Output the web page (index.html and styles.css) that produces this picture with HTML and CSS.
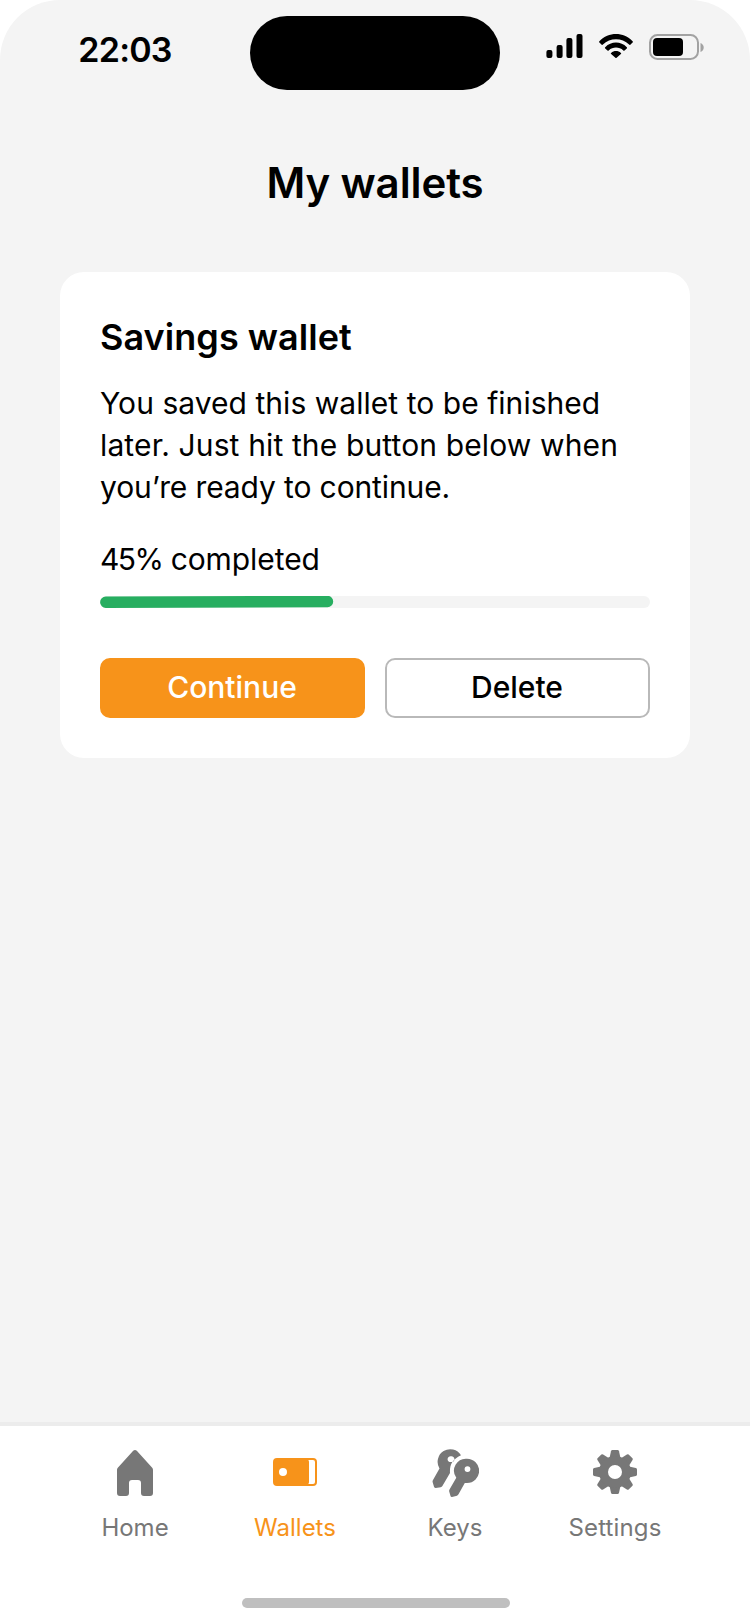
FILE: index.html
```html
<!DOCTYPE html>
<html lang="en">
<head>
<meta charset="utf-8">
<title>My wallets</title>
<link rel="stylesheet" href="styles.css">
</head>
<body>
<div class="screen">
  <header class="status">
    <div class="time">22:03</div>
    <div class="island"></div>
    <div class="indicators">
      <svg width="37" height="24" viewBox="0 0 37 24"><rect x=".4" y="16" width="6" height="8" rx="2"/><rect x="10.6" y="11" width="6" height="13" rx="2"/><rect x="20.4" y="4" width="6" height="20" rx="2"/><rect x="30.5" width="6" height="24" rx="2"/></svg>
      <svg class="wifi" width="34" height="24" viewBox="0 0 34 24"><path d="M0.4 7.3C9.5-2.3 24.5-2.3 33.6 7.3Q34.2 8 33.6 8.6L31.3 10.7Q30.7 11.2 30.1 10.6C23 3.4 11 3.4 3.9 10.6Q3.3 11.2 2.7 10.7L.4 8.6Q-.2 8 .4 7.3ZM6.2 13.2C12.2 7 21.8 7 27.8 13.2Q28.4 13.8 27.8 14.4L25.5 16.5Q24.9 17 24.3 16.4C20.2 12.6 13.8 12.6 9.7 16.4Q9.1 17 8.5 16.5L6.2 14.4Q5.6 13.8 6.2 13.2ZM12.1 18.9C14.8 16.4 19.2 16.4 21.9 18.9Q22.5 19.5 21.9 20.1L17.6 23.7Q17 24.2 16.4 23.7L12.1 20.1Q11.5 19.5 12.1 18.9Z"/></svg>
      <svg width="56" height="26" viewBox="0 0 56 26"><rect x="1" y="1" width="48" height="24" rx="7.5" fill="none" stroke="#a2a2a2" stroke-width="2"/><rect x="4" y="4" width="30" height="18" rx="4"/><path d="M51.5 9Q54.7 10.5 54.7 13.5Q54.7 16.5 51.5 18Z" fill="#a2a2a2"/></svg>
    </div>
  </header>
  <h1 class="title">My wallets</h1>
  <main class="content">
    <section class="card">
      <h2 class="card-title">Savings wallet</h2>
      <p class="text">You saved this wallet to be finished<br><span class="wide">later. Just hit the button below when</span><br><span class="tight">you’re ready to continue.</span></p>
      <p class="text completed"><span class="percent">45%</span> completed</p>
      <div class="track"><svg class="fill" width="234" height="12" viewBox="0 0 234 12"><path d="M5.8 6.3L227.5 5.5" stroke="#27ae60" stroke-width="11.4" stroke-linecap="round"/></svg></div>
      <div class="actions">
        <button class="button primary">Continue</button>
        <button class="button">Delete</button>
      </div>
    </section>
  </main>
  <nav class="tabs">
    <a class="tab"><svg width="44" height="56" viewBox="0 0 44 56"><path d="M20.2 5.7Q22 4.2 23.8 5.7L39.2 22.8Q40 23.7 40 25V48Q40 51 37 51H31Q28 51 28 48V38Q28 35 25 35H19Q16 35 16 38V48Q16 51 13 51H7Q4 51 4 48V25Q4 23.7 4.8 22.8Z"/></svg><span>Home</span></a>
    <a class="tab active"><svg width="44" height="56" viewBox="0 0 44 56"><path fill-rule="evenodd" d="M4 13H40Q44 13 44 17V37Q44 41 40 41H4Q0 41 0 37V17Q0 13 4 13ZM35 15Q36 15 36 17V37Q36 39 35 39H40Q42 39 42 37V17Q42 15 40 15ZM10 23A4 4 0 1 0 10 31A4 4 0 1 0 10 23Z"/></svg><span>Wallets</span></a>
    <a class="tab"><svg width="48" height="56" viewBox="-1 0 48 56"><path fill-rule="evenodd" d="M29 10.2A12.3 12.3 0 1 0 7.5 23.5L1 35Q.4 36 .6 37L2 41.8Q2.5 43 3.7 43L8.7 42.2Q9.8 42 10.4 41L18 28C17.5 20 20 14.5 29 10.2ZM19 11.3A2.9 2.9 0 1 0 19 17A2.9 2.9 0 1 0 19 11.3Z"/><path fill-rule="evenodd" d="M35 13.7A12 12 0 0 1 35 38L32.8 37.9L26.5 49.3Q26 50.3 25 50.7L20 52Q19 52.2 18.6 51.2L17.2 46.4Q17 45.4 17.5 44.5L24.3 32.7A12 12 0 0 1 35 13.7ZM35.5 21.2A2.9 2.9 0 1 0 35.5 27A2.9 2.9 0 1 0 35.5 21.2Z"/></svg><span>Keys</span></a>
    <a class="tab"><svg width="44" height="56" viewBox="-22 -27 44 56"><defs><path id="tooth" d="M-5.5-14L-4-20.8Q-3.7-22-2.7-22H2.7Q3.7-22 4-20.8L5.5-14Z"/></defs><use href="#tooth"/><use href="#tooth" transform="rotate(45)"/><use href="#tooth" transform="rotate(90)"/><use href="#tooth" transform="rotate(135)"/><use href="#tooth" transform="rotate(180)"/><use href="#tooth" transform="rotate(225)"/><use href="#tooth" transform="rotate(270)"/><use href="#tooth" transform="rotate(315)"/><circle r="11.5" fill="none" stroke="currentColor" stroke-width="9"/></svg><span class="wide">Settings</span></a>
  </nav>
  <div class="home-area"><div class="home-bar"></div></div>
</div>
</body>
</html>
```
FILE: styles.css
```css
* { box-sizing: border-box; }
body { margin: 0; background: #fff; color: #000; font-family: Inter, "Liberation Sans", sans-serif; }
svg { display: block; fill: currentColor; }
h1, h2, p { margin: 0; }
.screen { height: 1624px; display: flex; flex-direction: column; background: #f4f4f4; border-radius: 60px 60px 0 0; overflow: hidden; }
.status { display: grid; grid-template-columns: 250px 250px 250px; padding-top: 16px; height: 90px; }
.time { text-align: center; font-size: 34px; line-height: 40px; font-weight: 600; padding-top: 14px; letter-spacing: -0.8px; }
.island { height: 74px; border-radius: 37px; background: #000; }
.indicators { display: flex; align-items: flex-start; padding: 18px 0 0 46px; }
.wifi { margin: 0 16px 0 15.5px; }
.title { font-size: 42px; line-height: 50px; font-weight: 600; text-align: center; margin-top: 68px; letter-spacing: -0.1px; }
.content { flex: 1; padding: 64px 60px 0; }
.card { height: 486px; border-radius: 24px; background: #fff; padding: 43px 40px 40px; }
.card-title { font-size: 36px; line-height: 44px; font-weight: 600; letter-spacing: 0.05px; }
.text { font-size: 30px; line-height: 42px; font-weight: 400; letter-spacing: 0.04px; margin-top: 23px; white-space: nowrap; }
.wide { letter-spacing: 0.13px; }
.tight { letter-spacing: -0.12px; }
.completed { margin-top: 30px; letter-spacing: -0.08px; }
.percent { letter-spacing: -1.6px; }
.track { height: 12px; border-radius: 6px; background: #f4f4f4; margin-top: 16px; }
.actions { display: grid; grid-template-columns: 1fr 1fr; gap: 20px; margin-top: 50px; }
.button { height: 60px; border: 2px solid #b9b9b9; border-radius: 10px; background: #fff; color: #000; font: 500 30px/40px Inter, sans-serif; padding: 0 1px 2px 0; }
.primary { background: #f7931a; border-color: #f7931a; color: #fff; }
.tabs { height: 150px; border-top: 4px solid #ececec; background: #fff; display: grid; grid-template-columns: repeat(4, 160px); justify-content: center; padding-top: 19px; }
.tab { display: flex; flex-direction: column; align-items: center; color: #777; font-size: 24px; line-height: 30px; font-weight: 400; }
.tab span { margin-top: 12px; }
.active { color: #f7931a; }
.home-area { height: 52px; background: #fff; padding-top: 26px; }
.home-bar { width: 268px; height: 10px; margin-left: 242px; border-radius: 5px; background: #bfbfbf; }
```
